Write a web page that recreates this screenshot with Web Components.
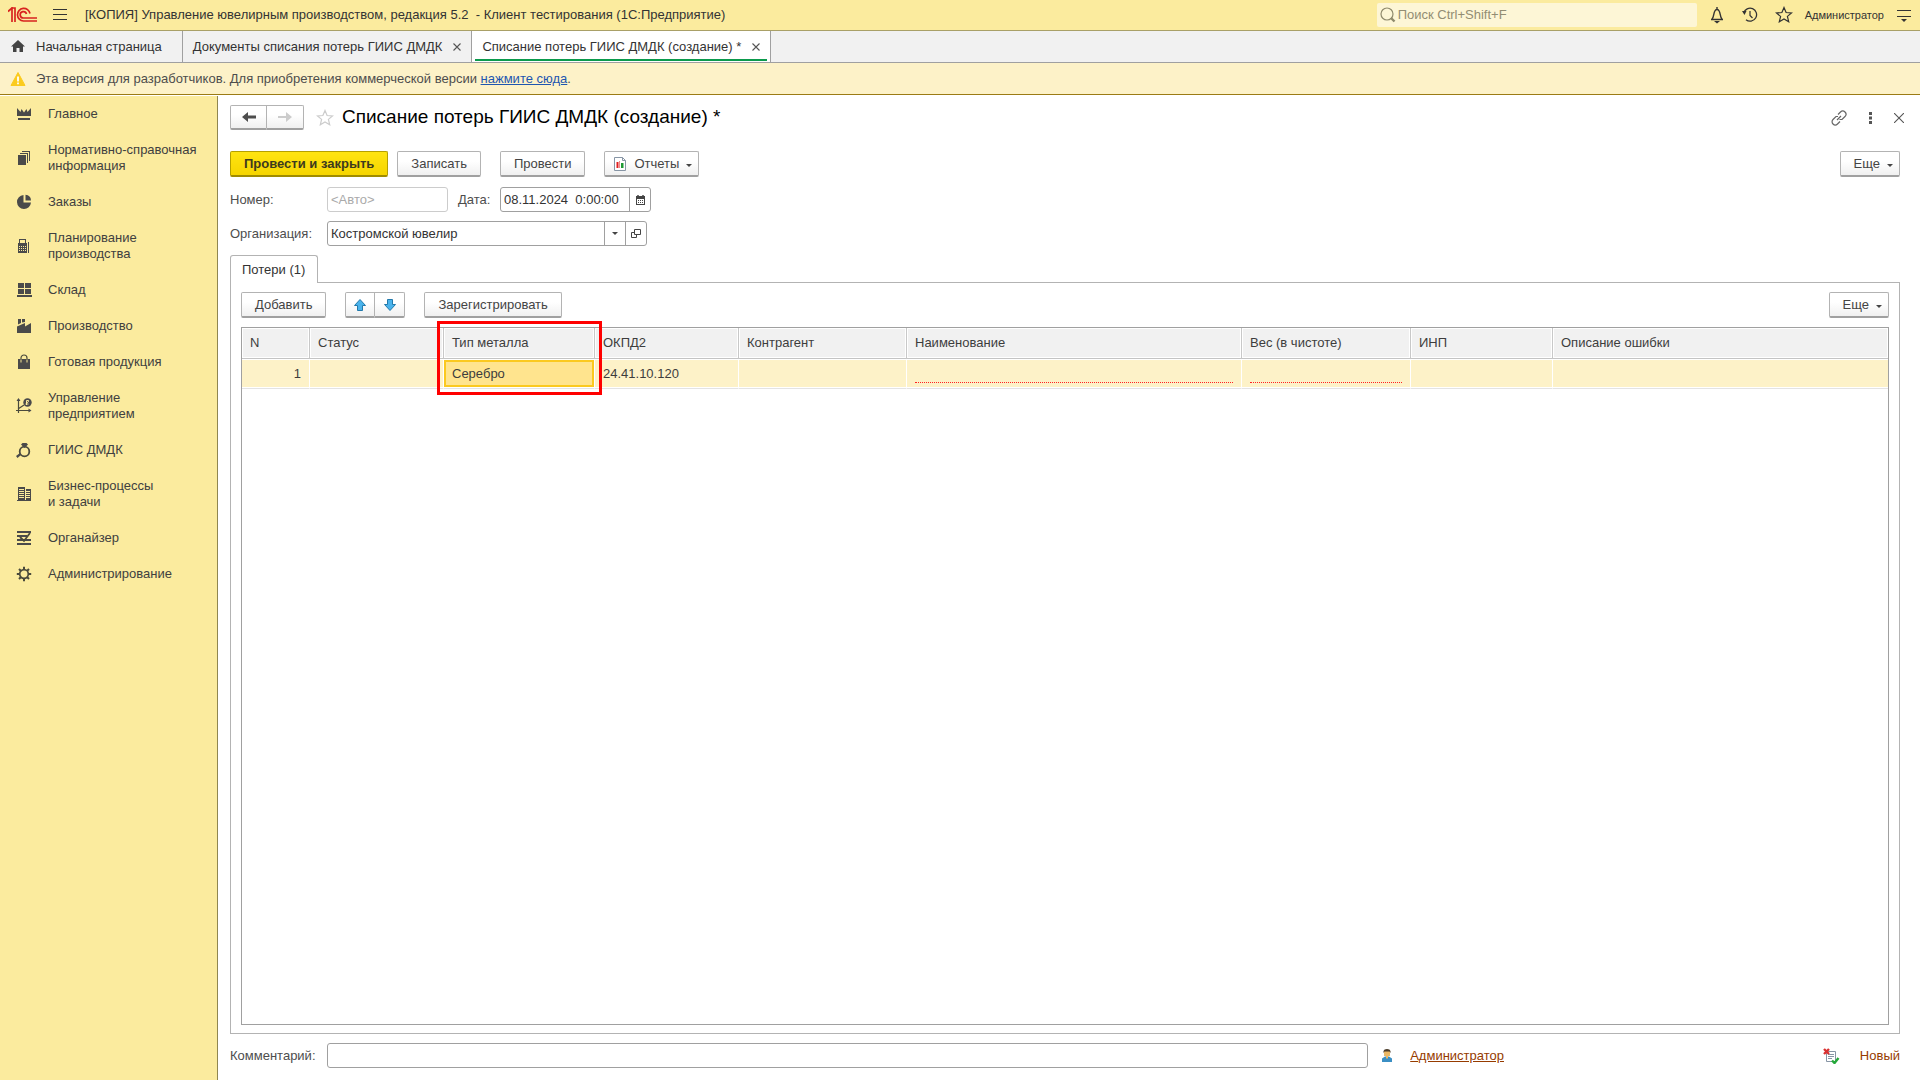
<!DOCTYPE html>
<html lang="ru">
<head>
<meta charset="utf-8">
<title>Списание потерь ГИИС ДМДК</title>
<style>
  html, body { height: 100%; margin: 0; }
  body { font: 13px/16px "Liberation Sans", Arial, sans-serif; color: #333; background: #fff; }
</style>
</head>
<body>
<erp-app></erp-app>
<script>
const ICONS = {
  logo: ['0 0 30 16', '<g fill="none" stroke="#d8231f" stroke-width="2"><path d="M0 4.5 4 1V15M3 1h4v14M22 6.500A6.300 6.300 0 1 0 15.500 14H29M18.500 7A3.200 3.200 0 1 0 15.500 11H29" stroke-width="1.700"/></g>'],
  burger: ['0 0 14 12', '<path d="M0 1h14M0 6h14M0 11h14" stroke="#333" stroke-width="1" transform="translate(0 -.5)"/>'],
  home: ['0 0 14 13', '<path fill="#444" d="M7 0 14 6.500H12V12H8.500V8h-3v4H2V6.500H0Z"/>'],
  close: ['0 0 8 8', '<path d="M.5.5l7 7M7.500.5l-7 7" stroke="#555" stroke-width="1.100"/>'],
  warn: ['0 0 16 16', '<path fill="#fbcb1e" stroke="#fbcb1e" stroke-linejoin="round" d="M8 1.500 15 14.500H1Z"/><path d="M8 5.500v5M8 11.500v1.800" stroke="#fff" stroke-width="1.800"/>'],
  search: ['0 0 16 16', '<circle cx="7" cy="7" r="6" fill="none" stroke="#8f8a6c" stroke-width="1.200"/><path d="M11 11l3.500 3.500" stroke="#8f8a6c" stroke-width="2.400"/>'],
  bell: ['0 0 16 18', '<path d="M8 1v2M2 13.500h12M3 13C5.500 11 4 3.500 8 3.500S10.500 11 13 13" fill="none" stroke="#333" stroke-width="1.400"/><path d="M5 15h6l-3 2.500Z" fill="#333"/>'],
  history: ['0 0 16 16', '<path d="M1.800 6A6.500 6.500 0 1 1 4 12.700" fill="none" stroke="#333" stroke-width="1.300"/><path d="M0 4h4.500L2.500 8Z" fill="#333"/><path d="M8 4v4.500l2.500 2.500" fill="none" stroke="#333" stroke-width="1.200"/>'],
  star: ['0 0 18 18', '<path d="M9 1.500l2.100 5 5.400.4-4.100 3.500 1.300 5.300L9 12.900l-4.700 2.800 1.300-5.300L1.500 6.900l5.400-.4Z" fill="none" stroke="currentColor" stroke-width="1.200"/>'],
  more: ['0 0 14 13', '<path d="M0 1.500h14M0 7.500h14" stroke="#333"/><path d="M4 10h6l-3 3Z" fill="#333"/>'],
  link: ['0 0 16 16', '<g fill="none" stroke="#666" stroke-width="1.200"><path d="M7 4.500 9.500 2A3 3 0 0 1 14 6.500L11 9.500H8.500M9 11.500 6.500 14A3 3 0 0 1 2 9.500L5 6.500H7M6 10l4-4"/></g>'],
  dots: ['0 0 3 12', '<path d="M0 0h3v3H0ZM0 4.500h3v3H0ZM0 9h3v3H0Z" fill="#555"/>'],
  cross: ['0 0 10 10', '<path d="M0 0l10 10M10 0L0 10" stroke="#555" stroke-width="1.100"/>'],
  left: ['0 0 14 10', '<path d="M0 5 6 0V3.500H14v3H6V10Z" fill="#4d4d4d"/>'],
  right: ['0 0 14 10', '<path d="M14 5 8 0V4H0v2H8v4Z" fill="#ccc"/>'],
  report: ['0 0 14 14', '<path d="M1.500.5h8l3 3v10h-11Z" fill="#fff" stroke="#8795a5"/><path d="M9.500.5v3h3" fill="none" stroke="#8795a5"/><path d="M3.500 5h2v6h-2Z" fill="#e02020"/><path d="M6 4h1v7H6Z" fill="#e88"/><path d="M8 6h2.500v5H8Z" fill="#1f9a35"/>'],
  caret: ['0 0 6 3', '<path d="M0 0h6L3 3Z" fill="#444"/>'],
  calendar: ['0 0 9 10', '<path d="M0 1h9v9H0Z" fill="#444"/><path d="M1 4h7v5H1Z" fill="#fff"/><path d="M2 0v2M7 0v2" stroke="#444" stroke-width="1.500"/><path d="M2 5.500h5M2 7.500h5" stroke="#444" stroke-dasharray="1 1"/>'],
  open: ['0 0 10 9', '<path d="M3.500.5h6v5h-6ZM3 3.500H.5v5h5V6" fill="none" stroke="#444"/>'],
  up: ['0 0 12 12', '<path d="M6 .5 11.500 6.500H8.500V11.500H3.500V6.500H.5Z" fill="#4ab3ec" stroke="#2279ab"/>'],
  down: ['0 0 12 12', '<path d="M6 11.500.5 5.500H3.500V.5H8.500V5.500H11.500Z" fill="#4ab3ec" stroke="#2279ab"/>'],
  user: ['0 0 10 13', '<path d="M2 1h6v6H2Z" fill="#eab765"/><path d="M1.500 4V2Q2 0 5 0t3.500 2V4L7.500 2.500h-5Z" fill="#4a3b28"/><path d="M0 13V9.500L3 7.500h4L10 9.500V13Z" fill="#3b8fc4"/><path d="M4 7h2v2L5 10 4 9Z" fill="#eab765"/>'],
  posted: ['0 0 17 16', '<path d="M3.500 3.500h9v10h-9Z" fill="#fff" stroke="#8795a5"/><path d="M5 6.500h6M5 8.500h6M5 10.500h4" stroke="#8795a5"/><path d="M1 1l5 5M6 1 1 6" stroke="#d93030" stroke-width="2.400"/><path d="M9 12.500l2.500 2.500L15.500 10" fill="none" stroke="#25a83a" stroke-width="2.400"/>'],
  crown: ['0 0 16 16', '<path d="M1 2 4.500 6 5.500 3 8 6.500 10.500 3 11.500 6 15 2V10H1ZM2 12h12v2H2Z"/>'],
  books: ['0 0 16 16', '<path d="M2 5h8v10H2ZM4 3h8v10h-1V4H4ZM6 1h8v10h-1V2H6Z"/>'],
  pie: ['0 0 16 16', '<path d="M7.500 1A7 7 0 1 0 15 8.500H7.500ZM9.500.8V6.500H15A6 6 0 0 0 9.500.8Z"/>'],
  calc: ['0 0 16 16', '<path d="M2 5h1V1h7v4h1v10H2ZM4 2v3h5V2ZM12 4h1v11h-1Z" fill-rule="evenodd"/><path d="M3 8.500h7M3 10.500h7M3 12.500h7" stroke="#fbeb9e" stroke-dasharray="1 1"/>'],
  boxes: ['0 0 16 16', '<path d="M2 1h6v5H2ZM9 1h6v5H9ZM2 7h6v5H2ZM9 7h6v5H9ZM1 13h15v2H1Z"/>'],
  factory: ['0 0 16 16', '<path d="M2 1h3v4L2 6.500ZM6 1h3v3L6 4.500ZM1 8.500 9 5v3.500L15 5v10H1Z"/>'],
  bag: ['0 0 16 16', '<path d="M2 5h12v10H2Z"/><path d="M5 8V4a3 3 0 0 1 6 0V8" fill="none" stroke="#4a4a3c" stroke-width="1.200"/><path d="M5 5.500v3M11 5.500v3" stroke="#fbeb9e"/>'],
  plan: ['0 0 16 16', '<path d="M2.500 1v14M0 12.500h14M2 11l6-4" fill="none" stroke="#4a4a3c" stroke-width="1.200"/><path d="M.5 3 2.500 0l2 3ZM12.500 10.500l3 2-3 2Z"/><circle cx="11.500" cy="4.500" r="4.200"/><path d="M10.500 7V2.500h2q1 1-2 2.500M9.500 6h3" stroke="#fbeb9e" fill="none"/>'],
  ring: ['0 0 16 16', '<circle cx="8.500" cy="9.500" r="4.800" fill="none" stroke="#4a4a3c" stroke-width="1.800"/><path d="M5 2.500 6.500 1h4L12 2.500 8.500 6ZM0 14l4-3 1.500 1.500L1.500 16Z"/>'],
  building: ['0 0 16 16', '<path d="M2 1h7v13H2ZM10 3h5v11h-5ZM1 14h14v1H1Z"/><path d="M3 3.500h5M3 5.500h5M3 7.500h5M3 9.500h5M3 11.500h5M10 5.500h4M10 7.500h4M10 9.500h4M10 11.500h4" stroke="#fbeb9e"/>'],
  organizer: ['0 0 16 16', '<path d="M1 1h14v2H1ZM1 5h10v2H1ZM1 9h14v2H1ZM1 13h14v2H1Z"/><path d="M4 7l4 4 6-8" fill="none" stroke="#4a4a3c" stroke-width="1.800"/>'],
  gear: ['0 0 16 16', '<circle cx="8" cy="8" r="4.300" fill="none" stroke="#4a4a3c" stroke-width="1.700"/><path d="M8 .800v3M8 12.200v3M.800 8h3M12.200 8h3M3 3l2 2M11 11l2 2M13 3l-2 2M5 11l-2 2" stroke="#4a4a3c" stroke-width="2"/>']
};

class Base extends HTMLElement {
  constructor() { super(); this.attachShadow({ mode: 'open' }); }
  a(name, fallback = '') { return this.getAttribute(name) ?? fallback; }
  connectedCallback() {
    this.shadowRoot.innerHTML = `<style>*{box-sizing:border-box}button,input{font:inherit;color:inherit;margin:0}
      button{cursor:default}${this.css()}</style>${this.html()}`;
  }
}

customElements.define('ui-icon', class extends Base {
  css() { return ':host{display:inline-flex;flex:none}svg{display:block;fill:#4a4a4a}'; }
  html() {
    const [box, body] = ICONS[this.a('name')];
    const [, , w, h] = box.split(' ');
    return `<svg width="${w}" height="${h}" viewBox="${box}" aria-hidden="true">${body}</svg>`;
  }
});

customElements.define('top-bar', class extends Base {
  css() { return `
    :host{display:flex;align-items:center;height:31px;flex:none;background:#fbeb9e;border-bottom:1px solid #a9a067;padding:0 9px 0 8px}
    .menu{margin-left:15px}
    button{background:none;border:0;padding:0;display:flex}
    h1{font-size:13px;line-height:16px;font-weight:400;margin:0 auto 0 18px;white-space:pre}
    .search{display:flex;align-items:center;width:320px;height:24px;background:#fdf6d6;border-radius:2px;padding-left:3px;gap:2px;margin-bottom:1px}
    input{flex:1;min-width:0;border:0;background:none;outline:0;padding:0}
    input::placeholder{color:#928d73;opacity:1}
    .tools{display:flex;align-items:center;gap:17px;margin:0 12px}
    .user{font-size:11px;margin-right:13px}`; }
  html() { return `
    <ui-icon name="logo"></ui-icon>
    <button class="menu" aria-label="Меню"><ui-icon name="burger"></ui-icon></button>
    <h1>[КОПИЯ] Управление ювелирным производством, редакция 5.2  - Клиент тестирования (1С:Предприятие)</h1>
    <label class="search"><ui-icon name="search"></ui-icon><input type="text" placeholder="Поиск Ctrl+Shift+F"></label>
    <div class="tools">
      <button aria-label="Уведомления"><ui-icon name="bell"></ui-icon></button>
      <button aria-label="История"><ui-icon name="history"></ui-icon></button>
      <button aria-label="Избранное"><ui-icon name="star"></ui-icon></button>
    </div>
    <button class="user">Администратор</button>
    <button aria-label="Настройки"><ui-icon name="more"></ui-icon></button>`; }
});

customElements.define('window-tab', class extends Base {
  css() { return `
    :host{display:flex;border-right:1px solid #a0a0a0;position:relative;padding:0 8px 0 10px}
    :host([home]){padding:0 20px 0 11px}
    :host([active]){background:#fff}
    :host([active])::after{content:"";position:absolute;left:3px;right:3px;bottom:1px;height:2px;background:#0b9a4c}
    button{background:none;border:0;padding:0;display:flex;align-items:center;gap:11px}
    .close{padding:0 2px;margin-left:9px}`; }
  html() { return `
    <button>${this.hasAttribute('home') ? '<ui-icon name="home"></ui-icon>' : ''}<span><slot></slot></span></button>
    ${this.hasAttribute('home') ? '' : '<button class="close" aria-label="Закрыть"><ui-icon name="close"></ui-icon></button>'}`; }
});

customElements.define('tab-strip', class extends Base {
  css() { return ':host{display:flex;height:32px;flex:none;background:#f1f1f1;border-bottom:1px solid #a0a0a0}'; }
  html() { return '<slot></slot>'; }
});

customElements.define('dev-notice', class extends Base {
  css() { return `
    :host{display:flex;align-items:center;gap:10px;height:32px;flex:none;background:#fdf2c8;border-bottom:1px solid #9b7b14;padding-left:10px;margin-bottom:1px;color:#4d4d4d}
    a{color:#1e56b0}`; }
  html() { return '<ui-icon name="warn"></ui-icon><span>Эта версия для разработчиков. Для приобретения коммерческой версии <a href="#">нажмите сюда</a>.</span>'; }
});

customElements.define('nav-item', class extends Base {
  css() { return `
    :host{display:block}
    a{display:flex;align-items:center;gap:16px;padding:10px 8px 10px 16px;color:#404040;text-decoration:none;white-space:pre-line}`; }
  html() { return `<a href="#"><ui-icon name="${this.a('icon')}"></ui-icon><span><slot></slot></span></a>`; }
});

customElements.define('side-nav', class extends Base {
  css() { return ':host{display:block;width:218px;flex:none;background:#fbeb9e;border-right:1px solid #8f8650}'; }
  html() {
    const items = [['crown', 'Главное'], ['books', 'Нормативно-справочная\nинформация'], ['pie', 'Заказы'],
      ['calc', 'Планирование\nпроизводства'], ['boxes', 'Склад'], ['factory', 'Производство'], ['bag', 'Готовая продукция'],
      ['plan', 'Управление\nпредприятием'], ['ring', 'ГИИС ДМДК'], ['building', 'Бизнес-процессы\nи задачи'],
      ['organizer', 'Органайзер'], ['gear', 'Администрирование']];
    return `<nav>${items.map(([i, t]) => `<nav-item icon="${i}">${t}</nav-item>`).join('')}</nav>`;
  }
});

customElements.define('ui-button', class extends Base {
  css() { return `
    :host{display:inline-flex;flex:none}
    button{display:flex;align-items:center;justify-content:center;gap:7px;height:26px;padding:0 13px;white-space:nowrap;
      border:1px solid #b3b3b3;border-bottom:2px solid #a0a0a0;border-radius:2px;background:linear-gradient(#fff 40%,#f0f0f0);color:#444}
    :host([primary]) button{background:linear-gradient(#ffe411,#f6d500);border-color:#b5a000;border-bottom-color:#a08c00;font-weight:700;color:#3d3a1e}
    :host([nav]) button{height:25px;width:37px;padding:0}
    :host([arrow]) button{width:30px;padding:0}
    :host([join=left]) button{border-radius:2px 0 0 2px}
    :host([join=right]) button{border-radius:0 2px 2px 0;border-left:0}
    :host([menu]) button{padding-right:6px}
    :host([menu][icon]) button{padding-left:8px}
    .caret{margin-top:3px}`; }
  html() {
    const icon = this.a('icon');
    return `<button type="button"${this.hasAttribute('hint') ? ` aria-label="${this.a('hint')}"` : ''}>${icon ? `<ui-icon name="${icon}"></ui-icon>` : ''}<slot></slot>${this.hasAttribute('menu') ? '<ui-icon class="caret" name="caret"></ui-icon>' : ''}</button>`;
  }
});

customElements.define('ui-field', class extends Base {
  css() { return `
    :host{display:flex;align-items:center;color:#4d4d4d}
    label{flex:none;width:var(--label,97px)}
    .box{display:flex;flex:1;min-width:0;height:25px;border:1px solid #a0a0a0;border-radius:3px;background:#fff;overflow:hidden}
    input{flex:1;min-width:0;border:0;outline:0;padding:0 3px;background:none;color:#333;white-space:pre}
    input::placeholder{color:#aaa;opacity:1}
    :host([muted]) .box{border-color:#ccc}
    button{width:21px;border:0;border-left:1px solid #a0a0a0;background:none;padding:0;display:flex;align-items:center;justify-content:center}`; }
  html() {
    return `<label for="f">${this.a('label')}</label><div class="box"><input id="f" type="text" value="${this.a('value')}" placeholder="${this.a('placeholder')}">${
      this.a('buttons').split(' ').filter(Boolean).map(b => `<button type="button" aria-label="${{ calendar: 'Календарь', caret: 'Список', open: 'Открыть' }[b]}"><ui-icon name="${b}"></ui-icon></button>`).join('')}</div>`;
  }
});

customElements.define('loss-grid', class extends Base {
  css() { return `
    :host{display:block;border:1px solid #a0a0a0;flex:1;min-height:0}
    table{width:100%;table-layout:fixed;border-collapse:separate;border-spacing:0}
    th,td{padding:0 8px;text-align:left;font-weight:400;white-space:nowrap;color:#3d3d3d}
    th{height:31px;background:#f1f1f1;border-right:1px solid #c8c8c8;border-bottom:1px solid #c4c4c4;box-shadow:inset 0 0 0 1px #fff;position:relative}
    td{height:30px;background:#fdf2c8;border-right:1px solid #fff;border-bottom:1px solid #e3e3e3;box-shadow:inset 0 1px #fff,inset 0 -1px #fff}
    td.num{text-align:right}
    td.sel{background:#ffe48e;box-shadow:inset 0 1px #fff,inset 0 -1px #fff,inset 2px 0 #fbc91f,inset -2px 0 #fbc91f,inset 0 3px #fbc91f,inset 0 -3px #fbc91f}
    td.req span{display:block;height:18px;border-bottom:1px dotted #f22}
    .frame{position:absolute;left:-7px;right:-8px;top:-7px;height:74px;border:3px solid #f00;pointer-events:none;z-index:1}
    th:last-child,td:last-child{border-right:0}`; }
  html() { return `<table>
    <colgroup><col style="width:68px"><col style="width:134px"><col style="width:151px"><col style="width:144px"><col style="width:168px"><col style="width:335px"><col style="width:169px"><col style="width:142px"><col></colgroup>
    <thead><tr><th>N</th><th>Статус</th><th>Тип металла<div class="frame"></div></th><th>ОКПД2</th><th>Контрагент</th><th>Наименование</th><th>Вес (в чистоте)</th><th>ИНП</th><th>Описание ошибки</th></tr></thead>
    <tbody><tr><td class="num">1</td><td></td><td class="sel">Серебро</td><td>24.41.10.120</td><td></td><td class="req"><span></span></td><td class="req"><span></span></td><td></td><td></td></tr></tbody>
    </table>`; }
});

customElements.define('loss-form', class extends Base {
  css() { return `
    :host{display:flex;flex-direction:column;flex:1;min-width:0;padding:9px 20px 12px 12px}
    .row{display:flex;align-items:center;flex:none}
    .push{margin-left:auto}
    h2{font-size:19px;line-height:24px;font-weight:400;color:#000;margin:0 0 2px 8px}
    .fav{color:#ccc;margin-left:12px}
    .fav,.tool{background:none;border:0;padding:0;display:flex}
    .head{height:25px}
    .tools{display:flex;align-items:center;gap:22px;margin:0 -4px 0 auto}
    .cmd{margin-top:21px}
    .r1{margin-top:10px;gap:10px}
    .r2{margin-top:9px}
    .date{--label:42px;width:193px}
    .num{width:218px}
    .org{width:417px}
    .tab{align-self:flex-start;margin:9px 0 -1px;height:28px;padding:0 12px 0 11px;border:1px solid #b3b3b3;border-bottom:0;border-radius:3px 3px 0 0;background:#fff;z-index:1}
    .panel{display:flex;flex-direction:column;flex:1;min-height:0;border:1px solid #b3b3b3;padding:9px 10px 8px}
    .panel .row{margin-bottom:9px}
    .foot{margin-top:9px}
    .note{flex:1}
    a{color:#963b00}
    .who{margin:0 18px 0 14px}
    .status{display:flex;align-items:center;justify-content:flex-end;gap:20px;width:396px;color:#963b00}`; }
  html() { return `
    <div class="row head">
      <ui-button nav join="left" icon="left" hint="Назад"></ui-button><ui-button nav join="right" icon="right" hint="Вперед"></ui-button>
      <button class="fav" aria-label="В избранное"><ui-icon name="star"></ui-icon></button>
      <h2>Списание потерь ГИИС ДМДК (создание) *</h2>
      <div class="tools">
        <button class="tool" aria-label="Ссылка"><ui-icon name="link"></ui-icon></button>
        <button class="tool" aria-label="Действия"><ui-icon name="dots"></ui-icon></button>
        <button class="tool" aria-label="Закрыть"><ui-icon name="cross"></ui-icon></button>
      </div>
    </div>
    <div class="row cmd">
      <ui-button primary>Провести и закрыть</ui-button>
      <ui-button style="margin-left:9px">Записать</ui-button>
      <ui-button style="margin-left:19px">Провести</ui-button>
      <ui-button style="margin-left:19px" icon="report" menu>Отчеты</ui-button>
      <ui-button class="push" menu>Еще</ui-button>
    </div>
    <div class="row r1">
      <ui-field class="num" label="Номер:" placeholder="&lt;Авто&gt;" muted></ui-field>
      <ui-field class="date" label="Дата:" value="08.11.2024  0:00:00" buttons="calendar"></ui-field>
    </div>
    <div class="row r2"><ui-field class="org" label="Организация:" value="Костромской ювелир" buttons="caret open"></ui-field></div>
    <button class="tab" type="button">Потери (1)</button>
    <section class="panel">
      <div class="row">
        <ui-button>Добавить</ui-button>
        <ui-button style="margin-left:19px" arrow join="left" icon="up" hint="Вверх"></ui-button><ui-button arrow join="right" icon="down" hint="Вниз"></ui-button>
        <ui-button style="margin-left:19px">Зарегистрировать</ui-button>
        <ui-button class="push" menu>Еще</ui-button>
      </div>
      <loss-grid></loss-grid>
    </section>
    <div class="row foot">
      <ui-field class="note" label="Комментарий:"></ui-field>
      <ui-icon class="who" name="user"></ui-icon><a href="#">Администратор</a>
      <div class="status"><ui-icon name="posted"></ui-icon><span>Новый</span></div>
    </div>`; }
});

customElements.define('erp-app', class extends Base {
  css() { return ':host{display:flex;flex-direction:column;height:100vh;overflow:hidden}.body{display:flex;flex:1;min-height:0}'; }
  html() { return `
    <top-bar></top-bar>
    <tab-strip>
      <window-tab home>Начальная страница</window-tab>
      <window-tab>Документы списания потерь ГИИС ДМДК</window-tab>
      <window-tab active>Списание потерь ГИИС ДМДК (создание) *</window-tab>
    </tab-strip>
    <dev-notice></dev-notice>
    <div class="body"><side-nav></side-nav><loss-form></loss-form></div>`; }
});
</script>
</body>
</html>
